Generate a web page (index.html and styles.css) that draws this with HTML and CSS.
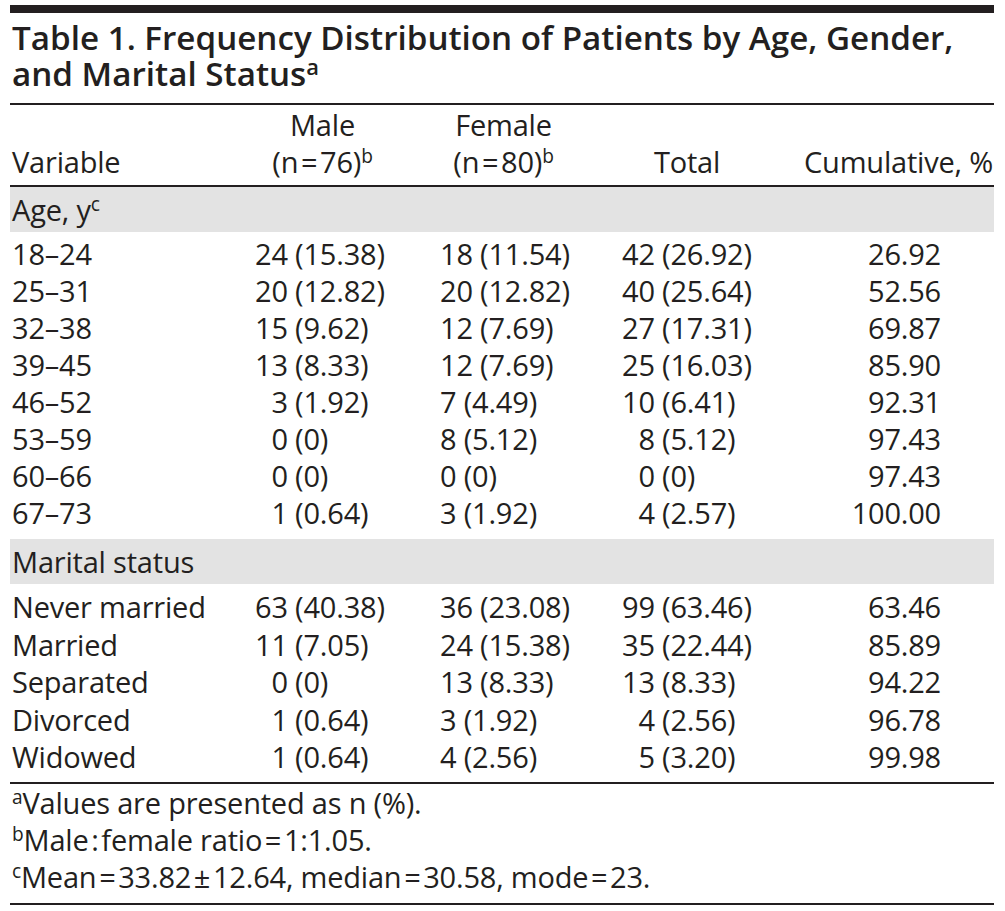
FILE: index.html
```html
<!DOCTYPE html>
<html lang="en">
<head>
<meta charset="utf-8">
<title>Table 1</title>
<link rel="stylesheet" href="styles.css">
</head>
<body>
<div class="page">
  <div class="topbar"></div>
  <h1 class="title">Table 1. Frequency Distribution of Patients by Age, Gender,<br>and Marital Status<sup>a</sup></h1>
  <table class="freq">
    <colgroup>
      <col class="c-var"><col class="c-male"><col class="c-female"><col class="c-total"><col class="c-cum">
    </colgroup>
    <thead>
      <tr>
        <th class="h-var">Variable</th>
        <th class="h-mid">Male<br>(n&#8202;=&#8202;76)<sup>b</sup></th>
        <th class="h-mid">Female<br>(n&#8202;=&#8202;80)<sup>b</sup></th>
        <th class="h-mid">Total</th>
        <th class="h-cum">Cumulative, %</th>
      </tr>
    </thead>
    <tbody>
      <tr class="group"><td colspan="5">Age, y<sup>c</sup></td></tr>
      <tr class="first"><td>18–24</td><td class="m">24 (15.38)</td><td class="f">18 (11.54)</td><td class="t">42 (26.92)</td><td class="cum">26.92</td></tr>
      <tr><td>25–31</td><td class="m">20 (12.82)</td><td class="f">20 (12.82)</td><td class="t">40 (25.64)</td><td class="cum">52.56</td></tr>
      <tr><td>32–38</td><td class="m">15 (9.62)</td><td class="f">12 (7.69)</td><td class="t">27 (17.31)</td><td class="cum">69.87</td></tr>
      <tr><td>39–45</td><td class="m">13 (8.33)</td><td class="f">12 (7.69)</td><td class="t">25 (16.03)</td><td class="cum">85.90</td></tr>
      <tr><td>46–52</td><td class="m">&#8199;3 (1.92)</td><td class="f">7 (4.49)</td><td class="t">10 (6.41)</td><td class="cum">92.31</td></tr>
      <tr><td>53–59</td><td class="m">&#8199;0 (0)</td><td class="f">8 (5.12)</td><td class="t">&#8199;8 (5.12)</td><td class="cum">97.43</td></tr>
      <tr><td>60–66</td><td class="m">&#8199;0 (0)</td><td class="f">0 (0)</td><td class="t">&#8199;0 (0)</td><td class="cum">97.43</td></tr>
      <tr class="last"><td>67–73</td><td class="m">&#8199;1 (0.64)</td><td class="f">3 (1.92)</td><td class="t">&#8199;4 (2.57)</td><td class="cum">100.00</td></tr>
      <tr class="group"><td colspan="5">Marital status</td></tr>
      <tr class="mar first2"><td>Never married</td><td class="m">63 (40.38)</td><td class="f">36 (23.08)</td><td class="t">99 (63.46)</td><td class="cum">63.46</td></tr>
      <tr class="mar"><td>Married</td><td class="m">11 (7.05)</td><td class="f">24 (15.38)</td><td class="t">35 (22.44)</td><td class="cum">85.89</td></tr>
      <tr class="mar"><td>Separated</td><td class="m">&#8199;0 (0)</td><td class="f">13 (8.33)</td><td class="t">13 (8.33)</td><td class="cum">94.22</td></tr>
      <tr class="mar"><td>Divorced</td><td class="m">&#8199;1 (0.64)</td><td class="f">3 (1.92)</td><td class="t">&#8199;4 (2.56)</td><td class="cum">96.78</td></tr>
      <tr class="mar end"><td>Widowed</td><td class="m">&#8199;1 (0.64)</td><td class="f">4 (2.56)</td><td class="t">&#8199;5 (3.20)</td><td class="cum">99.98</td></tr>
    </tbody>
  </table>
  <div class="notes">
    <p><sup>a</sup>Values are presented as n (%).</p>
    <p><sup>b</sup>Male&#8202;:&#8202;female ratio&#8202;=&#8202;1:1.05.</p>
    <p><sup>c</sup>Mean&#8202;=&#8202;33.82&#8202;±&#8202;12.64, median&#8202;=&#8202;30.58, mode&#8202;=&#8202;23.</p>
  </div>
</div>
</body>
</html>
```
FILE: styles.css
```css
html, body {
  margin: 0;
  padding: 0;
  background: #ffffff;
}

body {
  font-family: "Open Sans", "Noto Sans", "Liberation Sans", sans-serif;
  color: #231f20;
}

.page {
  width: 984px;
  padding: 5px 0 0 10px;
}

.topbar {
  height: 8px;
  background: #231f20;
}

.title {
  margin: 7px 0 11px 2px;
  font-size: 33.2px;
  line-height: 36px;
  font-weight: 600;
  letter-spacing: 0;
  white-space: nowrap;
}

sup {
  font-size: 0.66em;
  line-height: 0;
  vertical-align: 0.5em;
}

.freq {
  width: 984px;
  border-collapse: collapse;
  table-layout: fixed;
  font-size: 29px;
  line-height: 37px;
  letter-spacing: -0.2px;
  border-top: 2px solid #231f20;
  border-bottom: 2px solid #231f20;
}

.c-var { width: 220px; }
.c-male { width: 185px; }
.c-female { width: 177px; }
.c-total { width: 190px; }
.c-cum { width: 212px; }

.freq th {
  font-weight: 400;
  vertical-align: bottom;
  padding: 1px 0 5px 0;
  border-bottom: 2px solid #231f20;
}

.freq .h-var {
  text-align: left;
  padding-left: 2px;
}

.freq .h-mid {
  text-align: center;
}

.freq .h-cum {
  text-align: right;
  padding-right: 1px;
}

.freq td {
  padding: 0;
  white-space: nowrap;
}

.freq td:first-child {
  padding-left: 2px;
}

.freq .group td {
  background: #e3e3e3;
  padding: 4px 0 4px 2px;
}

.freq .first td {
  padding-top: 3px;
}

.freq .last td {
  padding-bottom: 8px;
}

.freq .mar td {
  line-height: 37.5px;
}

.freq .first2 td {
  padding-top: 4px;
}

.freq .end td {
  padding-bottom: 6px;
}

.freq td.m {
  padding-left: 25px;
}

.freq td.f {
  padding-left: 25px;
}

.freq td.t {
  padding-left: 30px;
}

.freq td.cum {
  text-align: right;
  padding-right: 53px;
}

.notes {
  font-size: 29px;
  line-height: 37px;
  letter-spacing: -0.2px;
  padding: 0 0 8px 2px;
  border-bottom: 2px solid #231f20;
}

.notes p {
  margin: 0;
}
```
